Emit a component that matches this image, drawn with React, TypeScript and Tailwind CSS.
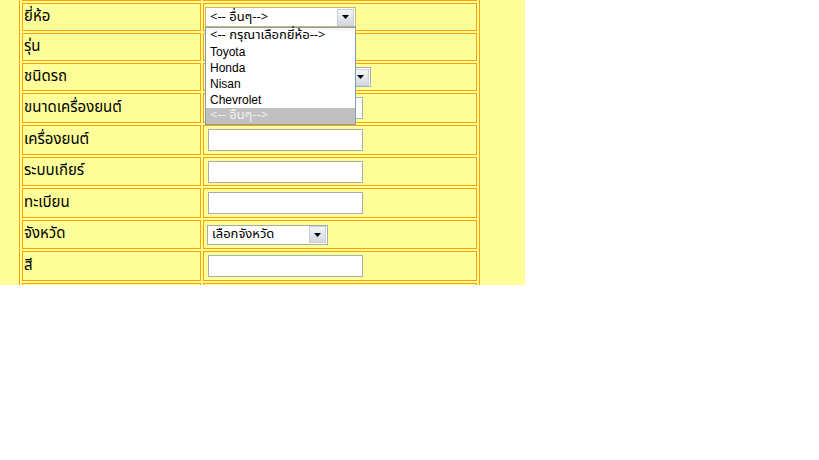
import React from "react"

const thai = { fontFamily: "Tahoma, 'Noto Sans Thai', 'Loma', 'Garuda', 'DejaVu Sans', sans-serif" }
const latin = { fontFamily: "Tahoma, 'Liberation Sans', 'Noto Sans Thai', sans-serif" }

type Field = { label: string; kind: "select" | "input" | "none"; h: string; value?: string; w?: string; focus?: boolean }

const rows: Field[] = [
  { label: "ยี่ห้อ", kind: "select", h: "h-[28px]", value: "<-- อื่นๆ-->", w: "w-[151px]", focus: true },
  { label: "รุ่น", kind: "select", h: "h-[28px]", value: "", w: "w-[130px]" },
  { label: "ชนิดรถ", kind: "select", h: "h-[28px]", value: "", w: "w-[166px]" },
  { label: "ขนาดเครื่องยนต์", kind: "input", h: "h-[30px]" },
  { label: "เครื่องยนต์", kind: "input", h: "h-[30px]" },
  { label: "ระบบเกียร์", kind: "input", h: "h-[29px]" },
  { label: "ทะเบียน", kind: "input", h: "h-[30px]" },
  { label: "จังหวัด", kind: "select", h: "h-[29px]", value: "เลือกจังหวัด", w: "w-[121px] ml-[2px]" },
  { label: "สี", kind: "input", h: "h-[30px]" },
  { label: "", kind: "none", h: "h-[30px]" },
]

const brands = ["Toyota", "Honda", "Nisan", "Chevrolet"]

function Arrow() {
  return (
    <div className="w-[17px] h-[17px] my-auto mr-[1px] flex items-center justify-center border border-[#c9d0d9] bg-gradient-to-b from-[#f3f5f8] to-[#d3d9e1]">
      <svg width="7" height="4" viewBox="0 0 7 4">
        <path d="M0 0h7L3.5 4z" fill="#000" />
      </svg>
    </div>
  )
}

function FakeSelect({ value, w, focus }: { value?: string; w?: string; focus?: boolean }) {
  return (
    <div
      className={`${w} h-[20px] flex items-stretch bg-white border ${focus ? "border-[#d8b165]" : "border-[#a5acb5]"}`}
    >
      <div className="flex-1 flex items-center pl-[4px] text-[13px] text-black leading-none" style={thai}>
        {value}
      </div>
      <Arrow />
    </div>
  )
}

export default function App() {
  return (
    <div className="w-[819px] h-[460px] bg-white overflow-hidden">
      <div className="relative w-[525px] h-[285px] bg-[#ffff99] overflow-hidden">
        <div className="ml-[19px] -mt-[29px] w-[461px] border-x border-[#ff9f00] flex flex-col gap-[2px] pl-[2px] pr-[2px]">
          <div className="flex gap-[2px] h-[30px]">
            <div className="w-[179px] border border-[#ff9f00]" />
            <div className="w-[274px] border border-[#ff9f00]" />
          </div>
          {rows.map((r, i) => (
            <div key={i} className={`flex gap-[2px] ${r.h}`}>
              <div
                className="w-[179px] border border-[#ff9f00] flex items-center pl-[1px] text-[15px] text-black"
                style={thai}
              >
                {r.label}
              </div>
              <div className="w-[274px] border border-[#ff9f00] flex items-center pl-[1px]">
                {r.kind === "select" && <FakeSelect value={r.value} w={r.w} focus={r.focus} />}
                {r.kind === "input" && (
                  <input
                    type="text"
                    className="ml-[3px] w-[155px] h-[22px] border border-[#a5acb5] bg-white outline-none"
                  />
                )}
              </div>
            </div>
          ))}
        </div>

        {/* open brand list */}
        <div className="absolute left-[205px] top-[27px] w-[151px] border border-[#7f9db9] bg-white">
          <div className="h-[16px] flex items-center pl-[4px] text-[13px] text-black" style={thai}>
            {"<-- กรุณาเลือกยี่ห้อ-->"}
          </div>
          {brands.map((b) => (
            <div key={b} className="h-[16px] flex items-center pl-[4px] text-[12px] text-black" style={latin}>
              {b}
            </div>
          ))}
          <div className="h-[16px] flex items-center pl-[4px] text-[13px] text-[#f2f2f2] bg-[#c0c0c0]" style={thai}>
            {"<-- อื่นๆ-->"}
          </div>
        </div>
      </div>
    </div>
  )
}
